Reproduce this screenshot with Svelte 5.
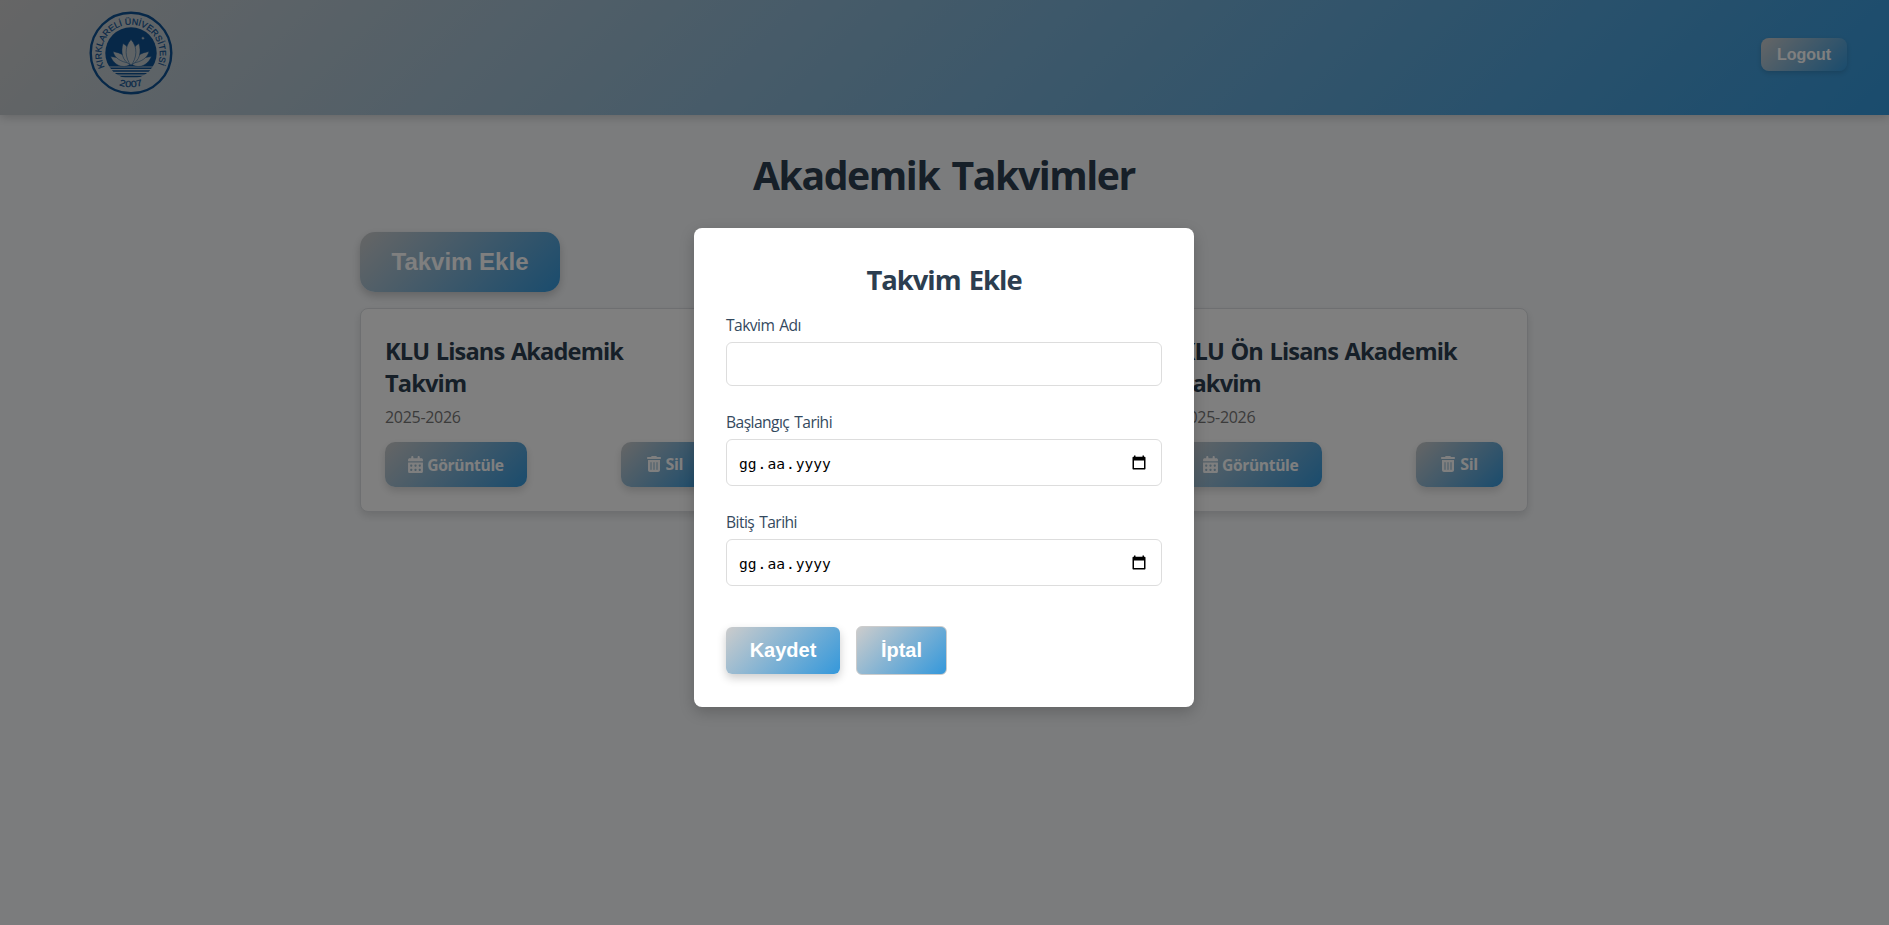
<script>
  const cards = [
    { title: 'KLU Lisans Akademik Takvim', year: '2025-2026' },
    null,
    { title: 'KLU Ön Lisans Akademik Takvim', year: '2025-2026' }
  ];
  const dates = ['Başlangıç Tarihi', 'Bitiş Tarihi'];
</script>

<div class="page">
  <header>
    <svg class="logo" width="84" height="84" viewBox="0 0 84 84">
      <defs>
        <path id="arc-top" d="M15.600 56.200A29.200 29.200 0 1 1 68.400 54.400" />
        <path id="arc-bottom" d="M21 69A34.500 34.500 0 0 0 63 69" />
        <clipPath id="disc"><circle cx="42" cy="42" r="25.700" /></clipPath>
      </defs>
      <circle cx="42" cy="42" r="40.300" fill="none" stroke="#0f5091" stroke-width="2.400" />
      <g clip-path="url(#disc)">
        <rect x="16" y="16" width="52" height="39.500" fill="#0f5091" />
        <path d="M16 57.300h52M18 60h48M20 62.700h44M24 65.400h36" stroke="#0f5091" stroke-width="1.500" />
      </g>
      <g fill="#bfc7cb" stroke="#0f5091" stroke-width=".5">
        <path d="M42 52C39 57 27 58 21.500 45.500C30 47 38 47 42 52zM42 52C45 57 57 58 62.500 45.500C54 47 46 47 42 52z" />
        <path d="M40 52C32 51 25.500 47 24 40.500C32 42 38 45 40 52zM44 52C52 51 58.500 47 60 40.500C52 42 46 45 44 52z" />
        <path d="M42 54C33 50 31.500 41 34 32.500C39.500 35 43 43 42 54zM42 54C51 50 52.500 41 50 32.500C44.500 35 41 43 42 54z" />
        <path d="M42 54.500C36 47 35 36 42 28.500C49 36 48 47 42 54.500z" />
      </g>
      <path d="M54 25.400l.6 1.300 1.300.2-1.300.8-.6 1.200-.6-1.200-1.200-.6 1.300-.6z" fill="#bfc7cb" />
      <text class="ring"><textPath href="#arc-top" textLength="116" lengthAdjust="spacingAndGlyphs">KIRKLARELİ ÜNİVERSİTESİ</textPath></text>
      <text class="ring"><textPath href="#arc-bottom" startOffset="50%" text-anchor="middle" textLength="24" lengthAdjust="spacingAndGlyphs">2007</textPath></text>
    </svg>
    <button class="logout">Logout</button>
  </header>

  <main>
    <h1>Akademik Takvimler</h1>
    <button class="add">Takvim Ekle</button>
    <div class="cards">
      {#each cards as card}
        <article>
          {#if card}
            <h3>{card.title}</h3>
            <p>{card.year}</p>
            <div class="actions">
              <a class="btn" href="#view">
                <svg width="15" height="17" viewBox="0 0 448 512"><path fill="currentColor" fill-rule="evenodd" d="M128 0c17.700 0 32 14.300 32 32v32h128V32c0-17.700 14.300-32 32-32s32 14.300 32 32v32h48c26.500 0 48 21.500 48 48v48H0v-48c0-26.500 21.500-48 48-48h48V32c0-17.700 14.300-32 32-32zM0 192h448v272c0 26.500-21.500 48-48 48H48c-26.500 0-48-21.500-48-48V192zm64 80v32c0 8.800 7.200 16 16 16h32c8.800 0 16-7.200 16-16v-32c0-8.800-7.200-16-16-16H80c-8.800 0-16 7.200-16 16zm128 0v32c0 8.800 7.200 16 16 16h32c8.800 0 16-7.200 16-16v-32c0-8.800-7.200-16-16-16h-32c-8.800 0-16 7.200-16 16zm144-16c-8.800 0-16 7.200-16 16v32c0 8.800 7.200 16 16 16h32c8.800 0 16-7.200 16-16v-32c0-8.800-7.200-16-16-16h-32zM64 400v32c0 8.800 7.200 16 16 16h32c8.800 0 16-7.200 16-16v-32c0-8.800-7.200-16-16-16H80c-8.800 0-16 7.200-16 16zm144-16c-8.800 0-16 7.200-16 16v32c0 8.800 7.200 16 16 16h32c8.800 0 16-7.200 16-16v-32c0-8.800-7.200-16-16-16h-32zm112 16v32c0 8.800 7.200 16 16 16h32c8.800 0 16-7.200 16-16v-32c0-8.800-7.200-16-16-16h-32c-8.800 0-16 7.200-16 16z" /></svg>
                <span>Görüntüle</span>
              </a>
              <button class="btn del">
                <svg width="14" height="16" viewBox="0 0 448 512"><path fill="currentColor" fill-rule="evenodd" d="M135.200 17.700 128 32H32C14.300 32 0 46.300 0 64s14.300 32 32 32h384c17.700 0 32-14.300 32-32s-14.300-32-32-32h-96l-7.200-14.300C307.400 6.800 296.300 0 284.200 0H163.800c-12.100 0-23.200 6.800-28.600 17.700zM416 128H32v320c0 35.300 28.700 64 64 64h256c35.300 0 64-28.700 64-64V128zM144 208v224c0 8.800-7.200 16-16 16s-16-7.200-16-16V208c0-8.800 7.200-16 16-16s16 7.200 16 16zm96 0v224c0 8.800-7.200 16-16 16s-16-7.200-16-16V208c0-8.800 7.200-16 16-16s16 7.200 16 16zm96 0v224c0 8.800-7.200 16-16 16s-16-7.200-16-16V208c0-8.800 7.200-16 16-16s16 7.200 16 16z" /></svg>
                <span>Sil</span>
              </button>
            </div>
          {/if}
        </article>
      {/each}
    </div>
  </main>

  <div class="overlay">
    <form class="modal">
      <h2>Takvim Ekle</h2>
      <label for="name">Takvim Adı</label>
      <input id="name" type="text" />
      {#each dates as label}
        <div class="label">{label}</div>
        <div class="date">
          <div class="fields"><span>gg</span>.<span>aa</span>.<span>yyyy</span></div>
          <svg width="14" height="15" viewBox="0 0 14 15"><path fill-rule="evenodd" d="M2 .5h1.500v1.300h7V.5H12v1.300h.5c.6 0 1 .4 1 1V13.500c0 .6-.4 1-1 1h-11c-.6 0-1-.4-1-1V2.800c0-.6.4-1 1-1H2zM2 5.500V13h10V5.500z" /></svg>
        </div>
      {/each}
      <div class="buttons">
        <button type="button" class="save">Kaydet</button>
        <button type="button" class="cancel">İptal</button>
      </div>
    </form>
  </div>
</div>

<style>
  :global(body) { margin: 0; background: #f8f9fa; }
  * { box-sizing: border-box; }
  .page { height: 925px; overflow: hidden; background: #f7f9fb; font-family: "Open Sans", "Noto Sans", sans-serif; color: #2c3e50; }
  button { border: 0; font-family: "Liberation Sans", Arial, sans-serif; font-weight: 700; color: #fff; background: linear-gradient(135deg, #ccc, #3498db); }
  header { height: 115px; padding: 0 42px 9px 89px; display: flex; align-items: center; justify-content: space-between; background: linear-gradient(135deg, #ccc, #3498db); box-shadow: 0 2px 10px rgba(0, 0, 0, .2); }
  .ring { font: 400 8.800px "Liberation Sans", Arial, sans-serif; fill: #0f5091; stroke: #0f5091; stroke-width: .2px; }
  .logout { width: 86px; height: 33px; margin-top: 3px; border-radius: 8px; font-size: 16px; padding: 0; box-shadow: 0 2px 5px rgba(0, 0, 0, .15); }
  main { width: 1168px; margin: 0 0 0 360px; }
  h1 { margin: 0; padding-top: 32px; height: 117px; line-height: 56px; font-size: 39.200px; letter-spacing: -1.430px; word-spacing: 3.500px; text-align: center; }
  .add { display: block; width: 200px; height: 60px; border-radius: 15px; font-size: 24px; padding: 0; box-shadow: 0 4px 10px rgba(0, 0, 0, .2); }
  .cards { display: grid; grid-template-columns: repeat(3, 1fr); gap: 24px; margin-top: 16px; }
  article { height: 204px; padding: 26px 24px 24px; border: 1px solid #dcdfe2; border-radius: 8px; background: #fff; box-shadow: 0 4px 8px rgba(0, 0, 0, .12); }
  h3 { margin: 0; font-size: 23.600px; line-height: 32px; letter-spacing: -.85px; word-spacing: 1.200px; }
  p { margin: 6px 0 0; height: 37px; font-size: 16px; line-height: 24px; letter-spacing: -.3px; color: #777; }
  .actions { display: flex; justify-content: space-between; }
  .btn { height: 45px; padding: 0; width: 142px; border-radius: 10px; display: flex; align-items: center; justify-content: center; gap: 4px; color: #fff; text-decoration: none; font: 700 15.600px/20px "Open Sans", sans-serif; letter-spacing: -.35px; background: linear-gradient(135deg, #ccc, #3498db); box-shadow: 0 4px 8px rgba(0, 0, 0, .15); }
  .del { width: 87px; padding-bottom: 2px; gap: 5px; font-size: 16px; }
  .overlay { position: absolute; inset: 0; padding: 228px 1px 0 0; display: flex; justify-content: center; align-items: flex-start; background: rgba(0, 0, 0, .5); }
  .modal { width: 500px; height: 479px; padding: 32px; border-radius: 8px; background: #fff; box-shadow: 0 5px 15px rgba(0, 0, 0, .2); }
  h2 { margin: 0; height: 53px; line-height: 39px; font-size: 27.400px; letter-spacing: -1px; word-spacing: 2px; text-align: center; }
  label, .label { display: block; height: 29px; line-height: 24px; font-size: 15.600px; letter-spacing: -.55px; word-spacing: 1.500px; color: #34495e; }
  input { display: block; width: 436px; height: 44px; margin-bottom: 24px; border: 1px solid #ddd; border-radius: 6px; background: #fff; padding: 0 12px; }
  .date { display: flex; align-items: center; justify-content: space-between; height: 47px; padding: 0 15px 0 11px; margin-bottom: 24px; border: 1px solid #ddd; border-radius: 6px; color: #000; font: 14.600px "DejaVu Sans Mono", monospace; }
  .fields { padding-top: 1px; }
  .fields span { padding: 0 1px; }
  .buttons { display: flex; align-items: center; gap: 16px; padding-top: 16px; }
  .save { width: 114px; height: 47px; border-radius: 6px; font-size: 20px; padding: 0; box-shadow: 0 4px 10px rgba(0, 0, 0, .2); }
  .cancel { width: 91px; height: 49px; border: 1px solid #ccc; border-radius: 6px; font-size: 20px; padding: 0; }
</style>
